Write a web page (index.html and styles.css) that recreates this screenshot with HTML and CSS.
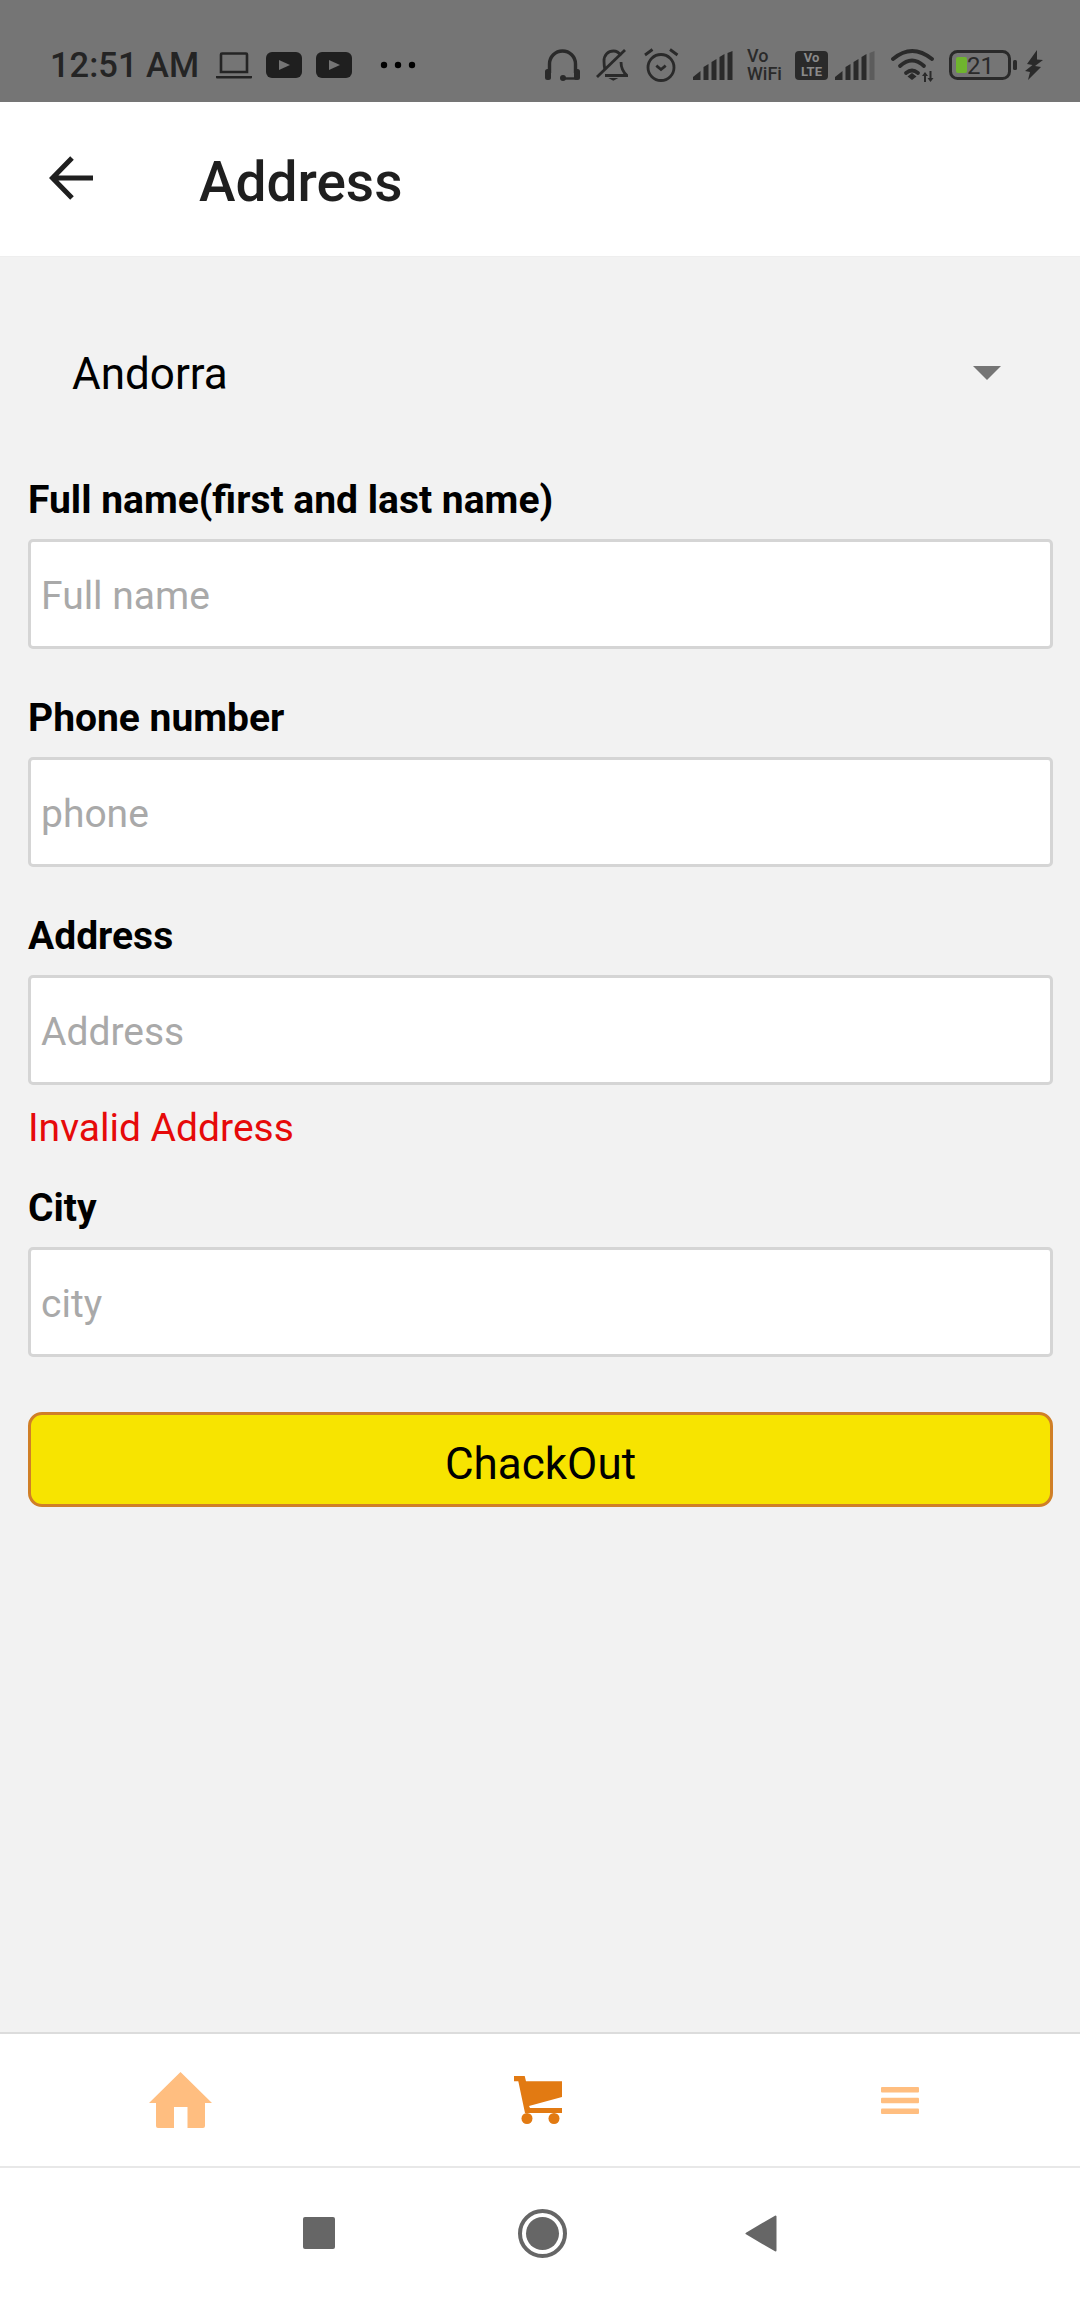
FILE: index.html
```html
<!DOCTYPE html>
<html lang="en">
<head>
    <meta charset="UTF-8">
    <title>Address</title>
    <link rel="stylesheet" href="styles.css">
</head>
<body>

    <div class="status-bar">
        <span class="time">12:51 AM</span>
        <svg class="i-laptop" viewBox="0 0 36 27"><path d="M5 2.500a1 1 0 0 1 1-1h24a1 1 0 0 1 1 1V20H5z" fill="none" stroke="#242424" stroke-width="2.600"/><path d="M0 24h36v1.500a1 1 0 0 1-1 1H1a1 1 0 0 1-1-1z" fill="#242424"/></svg>
        <svg class="i-yt" viewBox="0 0 36 26"><rect width="36" height="26" rx="6" fill="#1f1f1f"/><path d="M13 8l11 5-11 5z" fill="#757575"/></svg>
        <svg class="i-yt" viewBox="0 0 36 26"><rect width="36" height="26" rx="6" fill="#1f1f1f"/><path d="M13 8l11 5-11 5z" fill="#757575"/></svg>
        <svg class="i-dots" viewBox="0 0 36 8"><circle cx="4" cy="4" r="3.200"/><circle cx="18" cy="4" r="3.200"/><circle cx="32" cy="4" r="3.200"/></svg>

        <div class="status-right">
            <svg class="i-headset" viewBox="0 0 35 32"><path d="M4.500 24V15a13 13 0 0 1 26 0v9" fill="none" stroke="#2a2a2a" stroke-width="3.400"/><rect y="20" width="6" height="11" rx="2.500" fill="#2a2a2a"/><rect x="29" y="20" width="6" height="11" rx="2.500" fill="#2a2a2a"/><circle cx="18" cy="29" r="3" fill="#2a2a2a"/><path d="M18 29.500h13" stroke="#2a2a2a" stroke-width="2.400"/></svg>
            <svg class="i-bell" viewBox="0 0 32 32"><path d="M9 21c-.7-3-1-6-1-9 0-6 4-10 9.500-10 3 0 5.500 1.500 7.500 4.500M25 13c0 6 2 10 6 13.500H9" fill="none" stroke="#2a2a2a" stroke-width="2.800"/><path d="M1 28L29 1" stroke="#2a2a2a" stroke-width="2.800"/><path d="M12.300 29h10l-5 2.800z" fill="#2a2a2a"/></svg>
            <svg class="i-alarm" viewBox="0 0 35 34"><circle cx="17" cy="19.500" r="13" fill="none" stroke="#2a2a2a" stroke-width="2.800"/><path d="M12.300 17.700l4.700 3.800 4.700-3.800M1 7l7.500-5.500M33.500 7L26 1.500" fill="none" stroke="#2a2a2a" stroke-width="2.800"/></svg>
            <svg class="i-signal" viewBox="0 0 40 29"><g fill="#2a2a2a"><path d="M0 29v-3l7.500-6v9z"/><path d="M10.500 29V16l5-3v16z"/><path d="M18.500 29V11l5-3v21z"/><path d="M26.500 29V6l5-3v26z"/><path d="M34.500 29V2l5-2v29z"/></g></svg>
            <div class="vowifi">Vo<br>WiFi</div>
            <div class="volte">Vo<br>LTE</div>
            <svg class="i-signal2" viewBox="0 0 40 29"><g fill="#2a2a2a"><path d="M0 29v-3l7.500-6v9z"/><path d="M10.500 29V16l5-3v16z"/><path d="M18.500 29V11l5-3v21z"/><path d="M26.500 29V6l5-3v26z"/></g><path d="M34.500 29V2l5-2v29z" fill="#5c5c5c"/></svg>
            <svg class="i-wifi" viewBox="0 0 43 33"><g fill="none" stroke="#2a2a2a" stroke-width="3.800" stroke-linecap="round"><path d="M2 10Q21-6 41 10"/><path d="M9 17Q21 6 33 17"/><path d="M15 24Q21 19 27 24"/></g><path d="M16.500 27.500l4.500-3.500 4.500 3.500-4.500 3.500z" fill="#2a2a2a"/><path d="M34 24v9M39.500 22v9" stroke="#2a2a2a" stroke-width="2"/><path d="M31 27l3-4 3 4zM36.500 29l3 4 3-4z" fill="#2a2a2a"/></svg>
            <svg class="i-battery" viewBox="0 0 68 30"><rect x="1.500" y="1.500" width="59" height="27" rx="7" fill="none" stroke="#2a2a2a" stroke-width="3"/><rect x="7" y="7" width="11" height="16" rx="2" fill="#6fb52e"/><text class="battery-level" x="18" y="23.500">21</text><rect x="64" y="10" width="4" height="10" rx="1.500" fill="#2a2a2a"/></svg>
            <svg class="i-bolt" viewBox="0 0 18 30"><path d="M12 0L2 14l5.500 1L0 21l5 1-2 8 13-13-6-1 8-6-6-.5z" fill="#2a2a2a"/></svg>
        </div>
    </div>

    <header class="top-bar">
        <svg class="back-arrow" viewBox="0 0 44 44"><path d="M44 22H3.500M23 2L3.500 22 23 42" fill="none" stroke="#1f1f1f" stroke-width="5"/></svg>
        <h1 class="page-title">Address</h1>
    </header>

    <main class="content">
        <div class="country-select">
            <span>Andorra</span>
            <span class="caret"></span>
        </div>

        <div class="field">
            <label class="field-label">Full name(first and last name)</label>
            <input class="field-input" type="text" placeholder="Full name">
        </div>

        <div class="field">
            <label class="field-label">Phone number</label>
            <input class="field-input" type="text" placeholder="phone">
        </div>

        <div class="field field-invalid">
            <label class="field-label">Address</label>
            <input class="field-input" type="text" placeholder="Address">
            <p class="field-error">Invalid Address</p>
        </div>

        <div class="field">
            <label class="field-label">City</label>
            <input class="field-input" type="text" placeholder="city">
        </div>

        <button class="checkout-btn" type="button">ChackOut</button>
    </main>

    <nav class="tab-bar">
        <svg class="i-home" viewBox="0 0 63 56"><path d="M31.500 0L63 31h-7v23a2 2 0 0 1-2 2H38.500V35H25v21H9a2 2 0 0 1-2-2V31H0z" fill="#ffbe80"/></svg>
        <svg class="i-cart" viewBox="0 0 48 48"><path d="M0 0h10.700L12 5.300h36V21l-33 9 1 2h32v5H11L4.300 5.300H0z" fill="#e27a12"/><circle cx="13" cy="42.500" r="5.500" fill="#e27a12"/><circle cx="40" cy="42.500" r="5.500" fill="#e27a12"/></svg>
        <svg class="i-menu" viewBox="0 0 38 27"><rect width="38" height="5.500" rx="1" fill="#ffbe80"/><rect y="10.700" width="38" height="5.500" rx="1" fill="#ffbe80"/><rect y="21.500" width="38" height="5.500" rx="1" fill="#ffbe80"/></svg>
    </nav>

    <div class="system-nav">
        <svg class="i-square" viewBox="0 0 32 32"><rect width="32" height="32" rx="2" fill="#666"/></svg>
        <svg class="i-circle" viewBox="0 0 49 49"><circle cx="24.500" cy="24.500" r="22.500" fill="none" stroke="#666" stroke-width="4"/><circle cx="24.500" cy="24.500" r="16.500" fill="#666"/></svg>
        <svg class="i-triangle" viewBox="0 0 32 37"><path d="M1.500 18.500L30.500 1.500v34z" fill="#666" stroke="#666" stroke-width="2" stroke-linejoin="round"/></svg>
    </div>

</body>
</html>
```

FILE: styles.css
```css
* {
    box-sizing: border-box;
}
body {
    margin: 0;
    width: 1080px;
    height: 2298px;
    display: flex;
    flex-direction: column;
    background: #f2f2f2;
    font-family: Roboto, sans-serif;
    color: #000;
}
svg {
    display: block;
    flex: none;
}

/* status bar */
.status-bar {
    height: 102px;
    flex: none;
    display: flex;
    align-items: center;
    padding: 28px 37px 0 50px;
    background: #757575;
    color: #242424;
}
.time {
    width: 166px;
    font-size: 34.500px;
    font-weight: 500;
    white-space: nowrap;
}
.i-laptop {
    width: 36px;
    height: 27px;
}
.i-yt {
    width: 36px;
    height: 26px;
    margin-left: 14px;
}
.i-dots {
    width: 36px;
    height: 8px;
    margin-left: 28px;
}
.status-right {
    margin-left: auto;
    display: flex;
    align-items: center;
}
.i-headset {
    width: 35px;
    height: 32px;
}
.i-bell {
    width: 32px;
    height: 32px;
    margin-left: 16px;
}
.i-alarm {
    width: 35px;
    height: 34px;
    margin-left: 16px;
}
.i-signal {
    width: 40px;
    height: 29px;
    margin-left: 14px;
}
.vowifi {
    width: 36px;
    margin-left: 14px;
    font-size: 18px;
    font-weight: 500;
    line-height: 18px;
    color: #2a2a2a;
}
.volte {
    width: 33px;
    height: 29px;
    margin-left: 12px;
    border-radius: 4px;
    background: #2a2a2a;
    color: #8a8a8a;
    font-size: 13px;
    font-weight: 700;
    line-height: 14px;
    text-align: center;
}
.i-signal2 {
    width: 40px;
    height: 29px;
    margin-left: 7px;
}
.i-wifi {
    width: 43px;
    height: 33px;
    margin-left: 16px;
}
.i-battery {
    width: 68px;
    height: 30px;
    margin-left: 15px;
}
.battery-level {
    font-family: Roboto, sans-serif;
    font-size: 24px;
    fill: #2a2a2a;
}
.i-bolt {
    width: 18px;
    height: 30px;
    margin-left: 8px;
}

/* header */
.top-bar {
    height: 155px;
    flex: none;
    display: flex;
    align-items: center;
    padding-left: 49px;
    background: #fff;
    border-bottom: 1px solid #eeeeee;
}
.back-arrow {
    width: 44px;
    height: 44px;
    margin-top: -2px;
}
.page-title {
    margin: 6px 0 0 106px;
    font-size: 55px;
    font-weight: 500;
    color: #1f1f1f;
}

/* form */
.content {
    flex: 1;
    padding: 62px 27px 0 28px;
}
.country-select {
    height: 108px;
    display: flex;
    align-items: center;
    justify-content: space-between;
    padding: 2px 52px 0 44px;
    margin-bottom: 49px;
    font-size: 44px;
}
.caret {
    width: 0;
    height: 0;
    margin-top: -2px;
    border-left: 14px solid transparent;
    border-right: 14px solid transparent;
    border-top: 14px solid #757575;
}
.field {
    margin-bottom: 45px;
}
.field-invalid {
    margin-bottom: 33px;
}
.field-label {
    display: block;
    height: 46px;
    margin-bottom: 17px;
    font-size: 39px;
    font-weight: 700;
    line-height: 49px;
}
.field-input {
    display: block;
    width: 100%;
    height: 110px;
    padding: 3px 10px 0;
    background: #fff;
    border: 3px solid #d5d5d5;
    border-radius: 5px;
    outline: none;
    font-family: Roboto, sans-serif;
    font-size: 39px;
}
.field-input::placeholder {
    color: #a9a9a9;
    opacity: 1;
}
.field-error {
    margin: 20px 0 0;
    font-size: 39px;
    line-height: 46px;
    color: #e60a0a;
}
.checkout-btn {
    display: block;
    width: 100%;
    height: 95px;
    margin-top: 55px;
    padding: 8px 0 0;
    background: #f7e400;
    border: 3px solid #d07f27;
    border-radius: 14px;
    font-family: Roboto, sans-serif;
    font-size: 44px;
    color: #000;
}

/* bottom bars */
.tab-bar {
    height: 136px;
    flex: none;
    display: grid;
    grid-template-columns: repeat(3, 1fr);
    align-items: center;
    justify-items: center;
    background: #fff;
    border-top: 2px solid #dcdcdc;
    border-bottom: 2px solid #e8e8e8;
}
.i-home {
    width: 63px;
    height: 56px;
}
.i-cart {
    width: 48px;
    height: 48px;
    margin-right: 4px;
}
.i-menu {
    width: 38px;
    height: 27px;
}
.system-nav {
    height: 130px;
    flex: none;
    display: flex;
    align-items: center;
    justify-content: center;
    gap: 181px;
    background: #fff;
}
.i-square {
    width: 32px;
    height: 32px;
    margin-right: 2px;
}
.i-circle {
    width: 49px;
    height: 49px;
}
.i-triangle {
    width: 32px;
    height: 37px;
    margin-left: -3px;
}
```
